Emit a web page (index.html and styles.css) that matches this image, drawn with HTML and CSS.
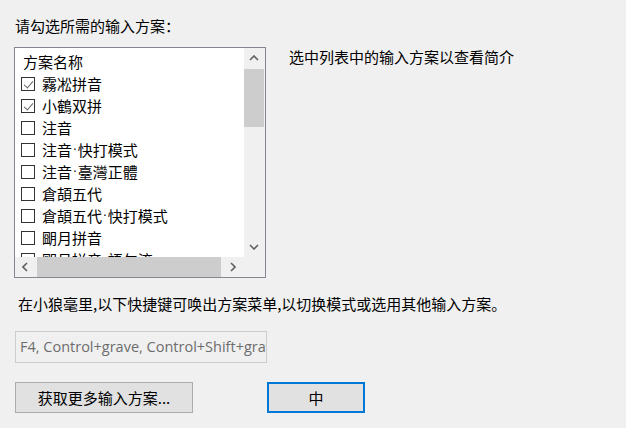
FILE: index.html
```html
<!DOCTYPE html>
<html lang="zh-CN">
<head>
    <meta charset="UTF-8">
    <title>输入方案设定</title>
    <link rel="stylesheet" href="styles.css">
</head>
<body>

<div class="page">
    <div class="title">请勾选所需的输入方案：</div>

    <div class="top">
        <div class="listbox">
            <div class="list">
                <div class="header">方案名称</div>
                <div class="row"><span class="check on"></span>霧凇拼音</div>
                <div class="row"><span class="check on"></span>小鶴双拼</div>
                <div class="row"><span class="check"></span>注音</div>
                <div class="row"><span class="check"></span>注音<span class="dot">·</span>快打模式</div>
                <div class="row"><span class="check"></span>注音<span class="dot">·</span>臺灣正體</div>
                <div class="row"><span class="check"></span>倉頡五代</div>
                <div class="row"><span class="check"></span>倉頡五代<span class="dot">·</span>快打模式</div>
                <div class="row"><span class="check"></span>朙月拼音</div>
                <div class="row"><span class="check"></span>朙月拼音<span class="dot">·</span>語句流</div>
            </div>
            <div class="vbar">
                <span class="arrow"><svg width="10" height="6" viewBox="0 0 10 6"><path d="M1 5 L5 1 L9 5" fill="none" stroke="#606060" stroke-width="1.6"/></svg></span>
                <span class="vthumb"></span>
                <span class="vspace"></span>
                <span class="arrow"><svg width="10" height="6" viewBox="0 0 10 6"><path d="M1 1 L5 5 L9 1" fill="none" stroke="#606060" stroke-width="1.6"/></svg></span>
            </div>
            <div class="hbar">
                <span class="arrow"><svg width="6" height="10" viewBox="0 0 6 10"><path d="M5 1 L1 5 L5 9" fill="none" stroke="#606060" stroke-width="1.6"/></svg></span>
                <span class="hthumb"></span>
                <span class="arrow"><svg width="6" height="10" viewBox="0 0 6 10"><path d="M1 1 L5 5 L1 9" fill="none" stroke="#606060" stroke-width="1.6"/></svg></span>
            </div>
            <div class="corner"></div>
        </div>
        <div class="desc">选中列表中的输入方案以查看简介</div>
    </div>

    <div class="hint">在小狼毫里,以下快捷键可唤出方案菜单,以切换模式或选用其他输入方案。</div>

    <div class="hotkeys">F4, Control+grave, Control+Shift+grave</div>

    <div class="actions">
        <button class="btn more">获取更多输入方案...</button>
        <button class="btn ok">中</button>
    </div>
</div>

</body>
</html>
```

FILE: styles.css
```css
body {
    margin: 0;
    background-color: #f0f0f0;
    font-family: "Noto Sans CJK SC", "Noto Sans", sans-serif;
    font-size: 15px;
    color: #000;
}
.page {
    padding: 16px 14px;
}
.title {
    height: 20px;
    line-height: 20px;
    padding-left: 1px;
    margin-bottom: 11px;
}
.top {
    display: flex;
    align-items: flex-start;
}
.listbox {
    width: 250px;
    height: 229px;
    border: 1px solid #828790;
    background: white;
    display: grid;
    grid-template-columns: 1fr 21px;
    grid-template-rows: 1fr 20px;
}
.list {
    overflow: hidden;
    padding-top: 3px;
}
.header {
    height: 22px;
    line-height: 22px;
    padding-left: 8px;
}
.row {
    height: 22px;
    line-height: 22px;
    display: flex;
    align-items: center;
    white-space: nowrap;
}
.dot {
    font-family: "DejaVu Sans", sans-serif;
    font-size: 12px;
    margin: 0 1px;
}
.check {
    width: 14px;
    height: 14px;
    border: 1px solid #333;
    margin: 0 7px 0 6px;
    box-sizing: border-box;
    flex: none;
    position: relative;
}
.check.on::after {
    content: "";
    position: absolute;
    left: 3.5px;
    top: 0.5px;
    width: 4px;
    height: 8px;
    border: solid #666;
    border-width: 0 1.3px 1.3px 0;
    transform: rotate(40deg);
}
.vbar {
    background: #f0f0f0;
    display: flex;
    flex-direction: column;
    padding-right: 1px;
}
.hbar {
    background: #f0f0f0;
    display: flex;
}
.corner {
    background: #f0f0f0;
}
.arrow {
    width: 20px;
    height: 20px;
    flex: none;
    display: flex;
    align-items: center;
    justify-content: center;
}
.vthumb {
    height: 58px;
    background: #cdcdcd;
    margin-top: 1px;
}
.vspace {
    flex: 1;
}
.hthumb {
    width: 184px;
    margin: 0 2px;
    background: #cdcdcd;
}
.desc {
    margin-left: 23px;
    line-height: 20px;
}
.hint {
    margin-top: 16px;
    line-height: 20px;
    padding-left: 4px;
}
.hotkeys {
    margin-top: 17px;
    width: 246px;
    height: 30px;
    line-height: 30px;
    padding-left: 4px;
    margin-left: 1px;
    border: 1px solid #cccccc;
    color: #6d6d6d;
    font-family: "Open Sans", sans-serif;
    font-size: 14.5px;
    white-space: nowrap;
    overflow: hidden;
    box-sizing: content-box;
}
.actions {
    margin-top: 19px;
    display: flex;
    gap: 74px;
    padding-left: 1px;
}
.btn {
    height: 31px;
    font-family: "Noto Sans CJK SC", sans-serif;
    font-size: 15px;
    background: #e1e1e1;
    border: 1px solid #adadad;
    padding: 0;
    color: #000;
}
.more {
    width: 178px;
}
.ok {
    width: 98px;
    border: 2px solid #0078d7;
}
```
